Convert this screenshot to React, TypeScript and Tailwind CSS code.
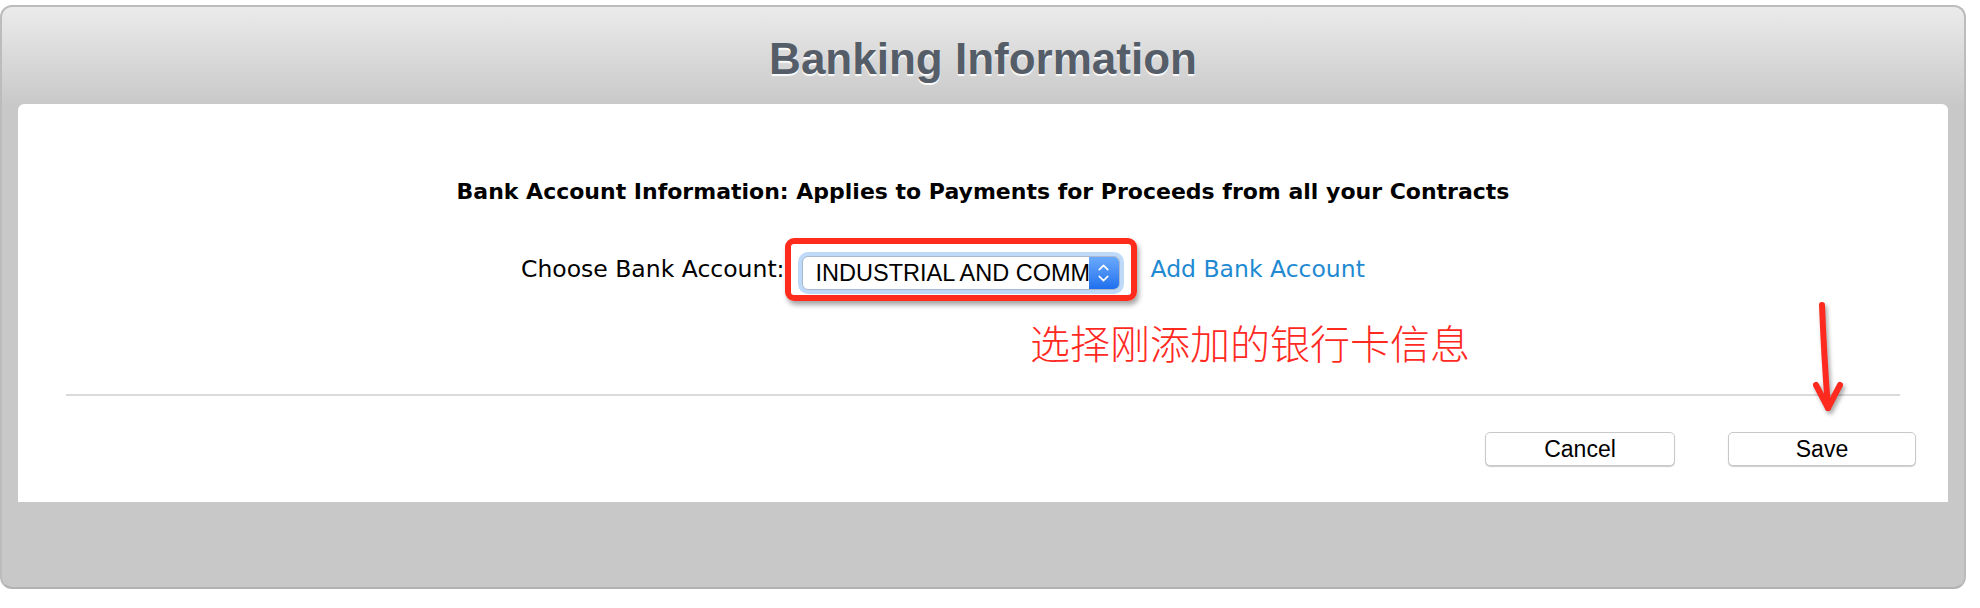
import { ChevronDown, ChevronUp } from "lucide-react";

const lucida = { fontFamily: '"DejaVu Sans", "Liberation Sans", sans-serif' };

export default function App() {
  return (
    <div className="w-[1980px] h-[608px] bg-white pt-[5px]">
      <div className="w-[1966px] rounded-[12px] border-2 border-[#bcbcbc] border-b-[#b2b2b2] bg-[#c8c8c8] overflow-hidden">
        {/* header */}
        <div className="h-[97px] bg-gradient-to-b from-[#ebebeb] to-[#c9c9c9] flex items-center justify-center pt-[6px]">
          <h1
            className="text-[44px] font-bold text-[#555e68] leading-none [text-shadow:0_2px_1px_rgba(255,255,255,0.95)]"
            style={{ fontFamily: '"Liberation Sans", Arial, sans-serif' }}
          >
            Banking Information
          </h1>
        </div>

        {/* white sheet */}
        <div className="relative mx-[16px] h-[398px] rounded-t-[6px] bg-white flex flex-col pt-[76px]">
          <p className="text-center text-[22px] leading-[24px] font-bold text-black" style={lucida}>
            Bank Account Information: Applies to Payments for Proceeds from all your Contracts
          </p>

          <div className="mt-[34px] h-[63px] flex items-center pl-[503px]" style={lucida}>
            <span className="text-[23.5px] text-black">Choose Bank Account:</span>
            <div className="rounded-[9px] border-[6px] border-[#ff2b1c] shadow-[2px_4px_5px_rgba(0,0,0,0.35)] px-[11px] pt-[12px] pb-[5px]">
              <div className="flex h-[34px] w-[318px] rounded-[6px] bg-white ring-[4px] ring-[#bfdaf8] border border-[#a9b8cc] overflow-hidden">
                <div
                  className="flex-1 overflow-hidden whitespace-nowrap pl-[13px] text-[23.5px] leading-[32px] text-black"
                  style={{ fontFamily: '"Liberation Sans", Arial, sans-serif' }}
                >
                  INDUSTRIAL AND COMMERCIAL BANK OF CHINA
                </div>
                <div className="w-[30px] flex flex-col items-center justify-center bg-gradient-to-b from-[#6aa9fa] to-[#1f6fee] text-white">
                  <ChevronUp size={17} strokeWidth={2.2} className="-mb-[3px]" />
                  <ChevronDown size={17} strokeWidth={2.2} className="-mt-[3px]" />
                </div>
              </div>
            </div>
            <span className="ml-[14px] text-[23.5px] text-[#1f8ad2]">Add Bank Account</span>
          </div>

          <p
            className="mt-[21px] pl-[1012px] text-[40px] leading-[40px] font-light text-[#ff2a1f]"
            style={{ fontFamily: '"Noto Sans CJK SC", sans-serif' }}
          >
            选择刚添加的银行卡信息
          </p>

          <div className="mt-[32px] mx-[48px] h-[2px] bg-[#dadada]" />

          <div
            className="mt-[36px] flex justify-end gap-[53px] pr-[32px] text-[23px] text-black"
            style={{ fontFamily: '"Liberation Sans", Arial, sans-serif' }}
          >
            <button className="h-[34px] w-[190px] rounded-[5px] border border-[#c9c9c9] bg-white shadow-[0_1px_1px_rgba(0,0,0,0.2)] leading-none">
              Cancel
            </button>
            <button className="h-[34px] w-[188px] rounded-[5px] border border-[#c9c9c9] bg-white shadow-[0_1px_1px_rgba(0,0,0,0.2)] leading-none">
              Save
            </button>
          </div>

          {/* hand-drawn arrow annotation */}
          <svg
            className="absolute left-[1787px] top-[191px] drop-shadow-[2px_3px_2px_rgba(0,0,0,0.35)]"
            width="50"
            height="130"
            viewBox="0 0 50 130"
          >
            <path
              d="M17 10 C18 35 20 75 23 113"
              stroke="#ff2a1f"
              strokeWidth="6"
              strokeLinecap="round"
              fill="none"
            />
            <path
              d="M11 90 L23 113 L35 90"
              stroke="#ff2a1f"
              strokeWidth="6"
              strokeLinecap="round"
              strokeLinejoin="round"
              fill="none"
            />
          </svg>
        </div>

        <div className="h-[85px]" />
      </div>
    </div>
  );
}
